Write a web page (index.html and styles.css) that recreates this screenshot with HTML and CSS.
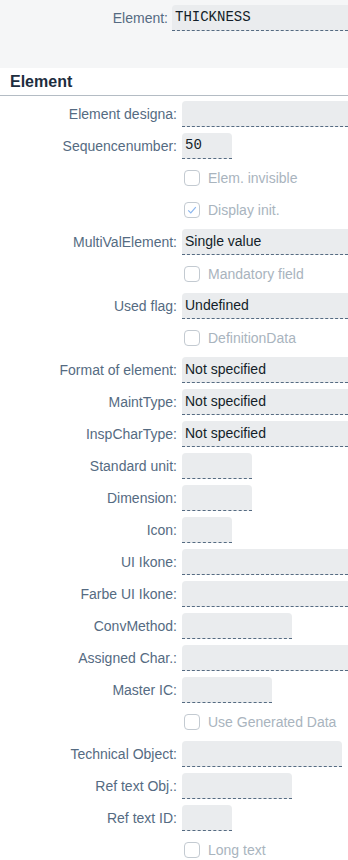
FILE: index.html
```html
<!DOCTYPE html>
<html lang="en">

<head>
    <meta charset="UTF-8">
    <meta name="viewport" content="width=device-width, initial-scale=1.0">
    <title>Element</title>
    <link rel="stylesheet" href="styles.css">
</head>

<body>
    <div class="header">
        <div class="row header-row">
            <label class="label">Element:</label>
            <div class="input full mono">THICKNESS</div>
        </div>
    </div>

    <div class="section">
        <h2 class="section-title">Element</h2>
        <div class="form">
            <div class="row">
                <label class="label">Element designa:</label>
                <div class="input full"></div>
            </div>
            <div class="row">
                <label class="label">Sequencenumber:</label>
                <div class="input w50 mono">50</div>
            </div>
            <div class="row check-row">
                <span class="checkbox"></span>
                <span class="check-text">Elem. invisible</span>
            </div>
            <div class="row check-row">
                <span class="checkbox checked">
                    <svg width="12" height="12" viewBox="0 0 12 12"><path d="M2.2 6.3 L4.8 8.9 L9.8 3.2" fill="none" stroke="#8cb7ef" stroke-width="1.2"/></svg>
                </span>
                <span class="check-text">Display init.</span>
            </div>
            <div class="row">
                <label class="label">MultiValElement:</label>
                <div class="input full">Single value</div>
            </div>
            <div class="row check-row">
                <span class="checkbox"></span>
                <span class="check-text">Mandatory field</span>
            </div>
            <div class="row">
                <label class="label">Used flag:</label>
                <div class="input full">Undefined</div>
            </div>
            <div class="row check-row">
                <span class="checkbox"></span>
                <span class="check-text">DefinitionData</span>
            </div>
            <div class="row">
                <label class="label">Format of element:</label>
                <div class="input full">Not specified</div>
            </div>
            <div class="row">
                <label class="label">MaintType:</label>
                <div class="input full">Not specified</div>
            </div>
            <div class="row">
                <label class="label">InspCharType:</label>
                <div class="input full">Not specified</div>
            </div>
            <div class="row">
                <label class="label">Standard unit:</label>
                <div class="input w70"></div>
            </div>
            <div class="row">
                <label class="label">Dimension:</label>
                <div class="input w70"></div>
            </div>
            <div class="row">
                <label class="label">Icon:</label>
                <div class="input w50"></div>
            </div>
            <div class="row">
                <label class="label">UI Ikone:</label>
                <div class="input full"></div>
            </div>
            <div class="row">
                <label class="label">Farbe UI Ikone:</label>
                <div class="input full"></div>
            </div>
            <div class="row">
                <label class="label">ConvMethod:</label>
                <div class="input w110"></div>
            </div>
            <div class="row">
                <label class="label">Assigned Char.:</label>
                <div class="input full"></div>
            </div>
            <div class="row">
                <label class="label">Master IC:</label>
                <div class="input w90"></div>
            </div>
            <div class="row check-row">
                <span class="checkbox"></span>
                <span class="check-text">Use Generated Data</span>
            </div>
            <div class="row">
                <label class="label">Technical Object:</label>
                <div class="input w160"></div>
            </div>
            <div class="row">
                <label class="label">Ref text Obj.:</label>
                <div class="input w110"></div>
            </div>
            <div class="row">
                <label class="label">Ref text ID:</label>
                <div class="input w50"></div>
            </div>
            <div class="row check-row">
                <span class="checkbox"></span>
                <span class="check-text">Long text</span>
            </div>
        </div>
    </div>
</body>

</html>
```

FILE: styles.css
```css
body {
    font-family: "Liberation Sans", Arial, sans-serif;
    font-size: 14px;
    margin: 0;
    padding: 0;
    background-color: #ffffff;
}

.header {
    background-color: #f5f6f7;
    height: 68px;
    padding-top: 5px;
    box-sizing: border-box;
}

.row {
    display: flex;
    align-items: center;
    height: 26px;
    margin-bottom: 6px;
}

.label {
    width: 182px;
    flex-shrink: 0;
    text-align: right;
    color: #556b82;
    padding-right: 5px;
    box-sizing: border-box;
}

.header-row .label {
    width: 172px;
    padding-right: 4px;
}

.input {
    height: 26px;
    box-sizing: border-box;
    flex-shrink: 0;
    background-color: #eaecee;
    border-radius: 4px 4px 0 0;
    border-bottom: 1px dashed #556b82;
    padding: 0 3px;
    line-height: 25px;
    color: #131e29;
}

.mono {
    font-family: "Liberation Mono", "Courier New", monospace;
}

/* full-width fields run off the right edge */
.full {
    flex: 1;
    border-top-right-radius: 0;
}

.w50 { width: 50px; }
.w70 { width: 70px; }
.w90 { width: 90px; }
.w110 { width: 110px; }
.w160 { width: 160px; }

.section-title {
    margin: 0;
    height: 28px;
    padding: 3px 0 0 10px;
    box-sizing: border-box;
    font-size: 16px;
    font-weight: bold;
    color: #1d2d3e;
    border-bottom: 1px solid #b4bcc4;
    line-height: 22px;
}

.form {
    padding-top: 5px;
}

.check-row {
    padding-left: 184px;
    gap: 8px;
}

.checkbox {
    width: 16px;
    height: 16px;
    box-sizing: border-box;
    border: 1px solid #c3cad1;
    border-radius: 4px;
    display: flex;
    align-items: center;
    justify-content: center;
}

.check-text {
    color: #a9b4be;
}
```
